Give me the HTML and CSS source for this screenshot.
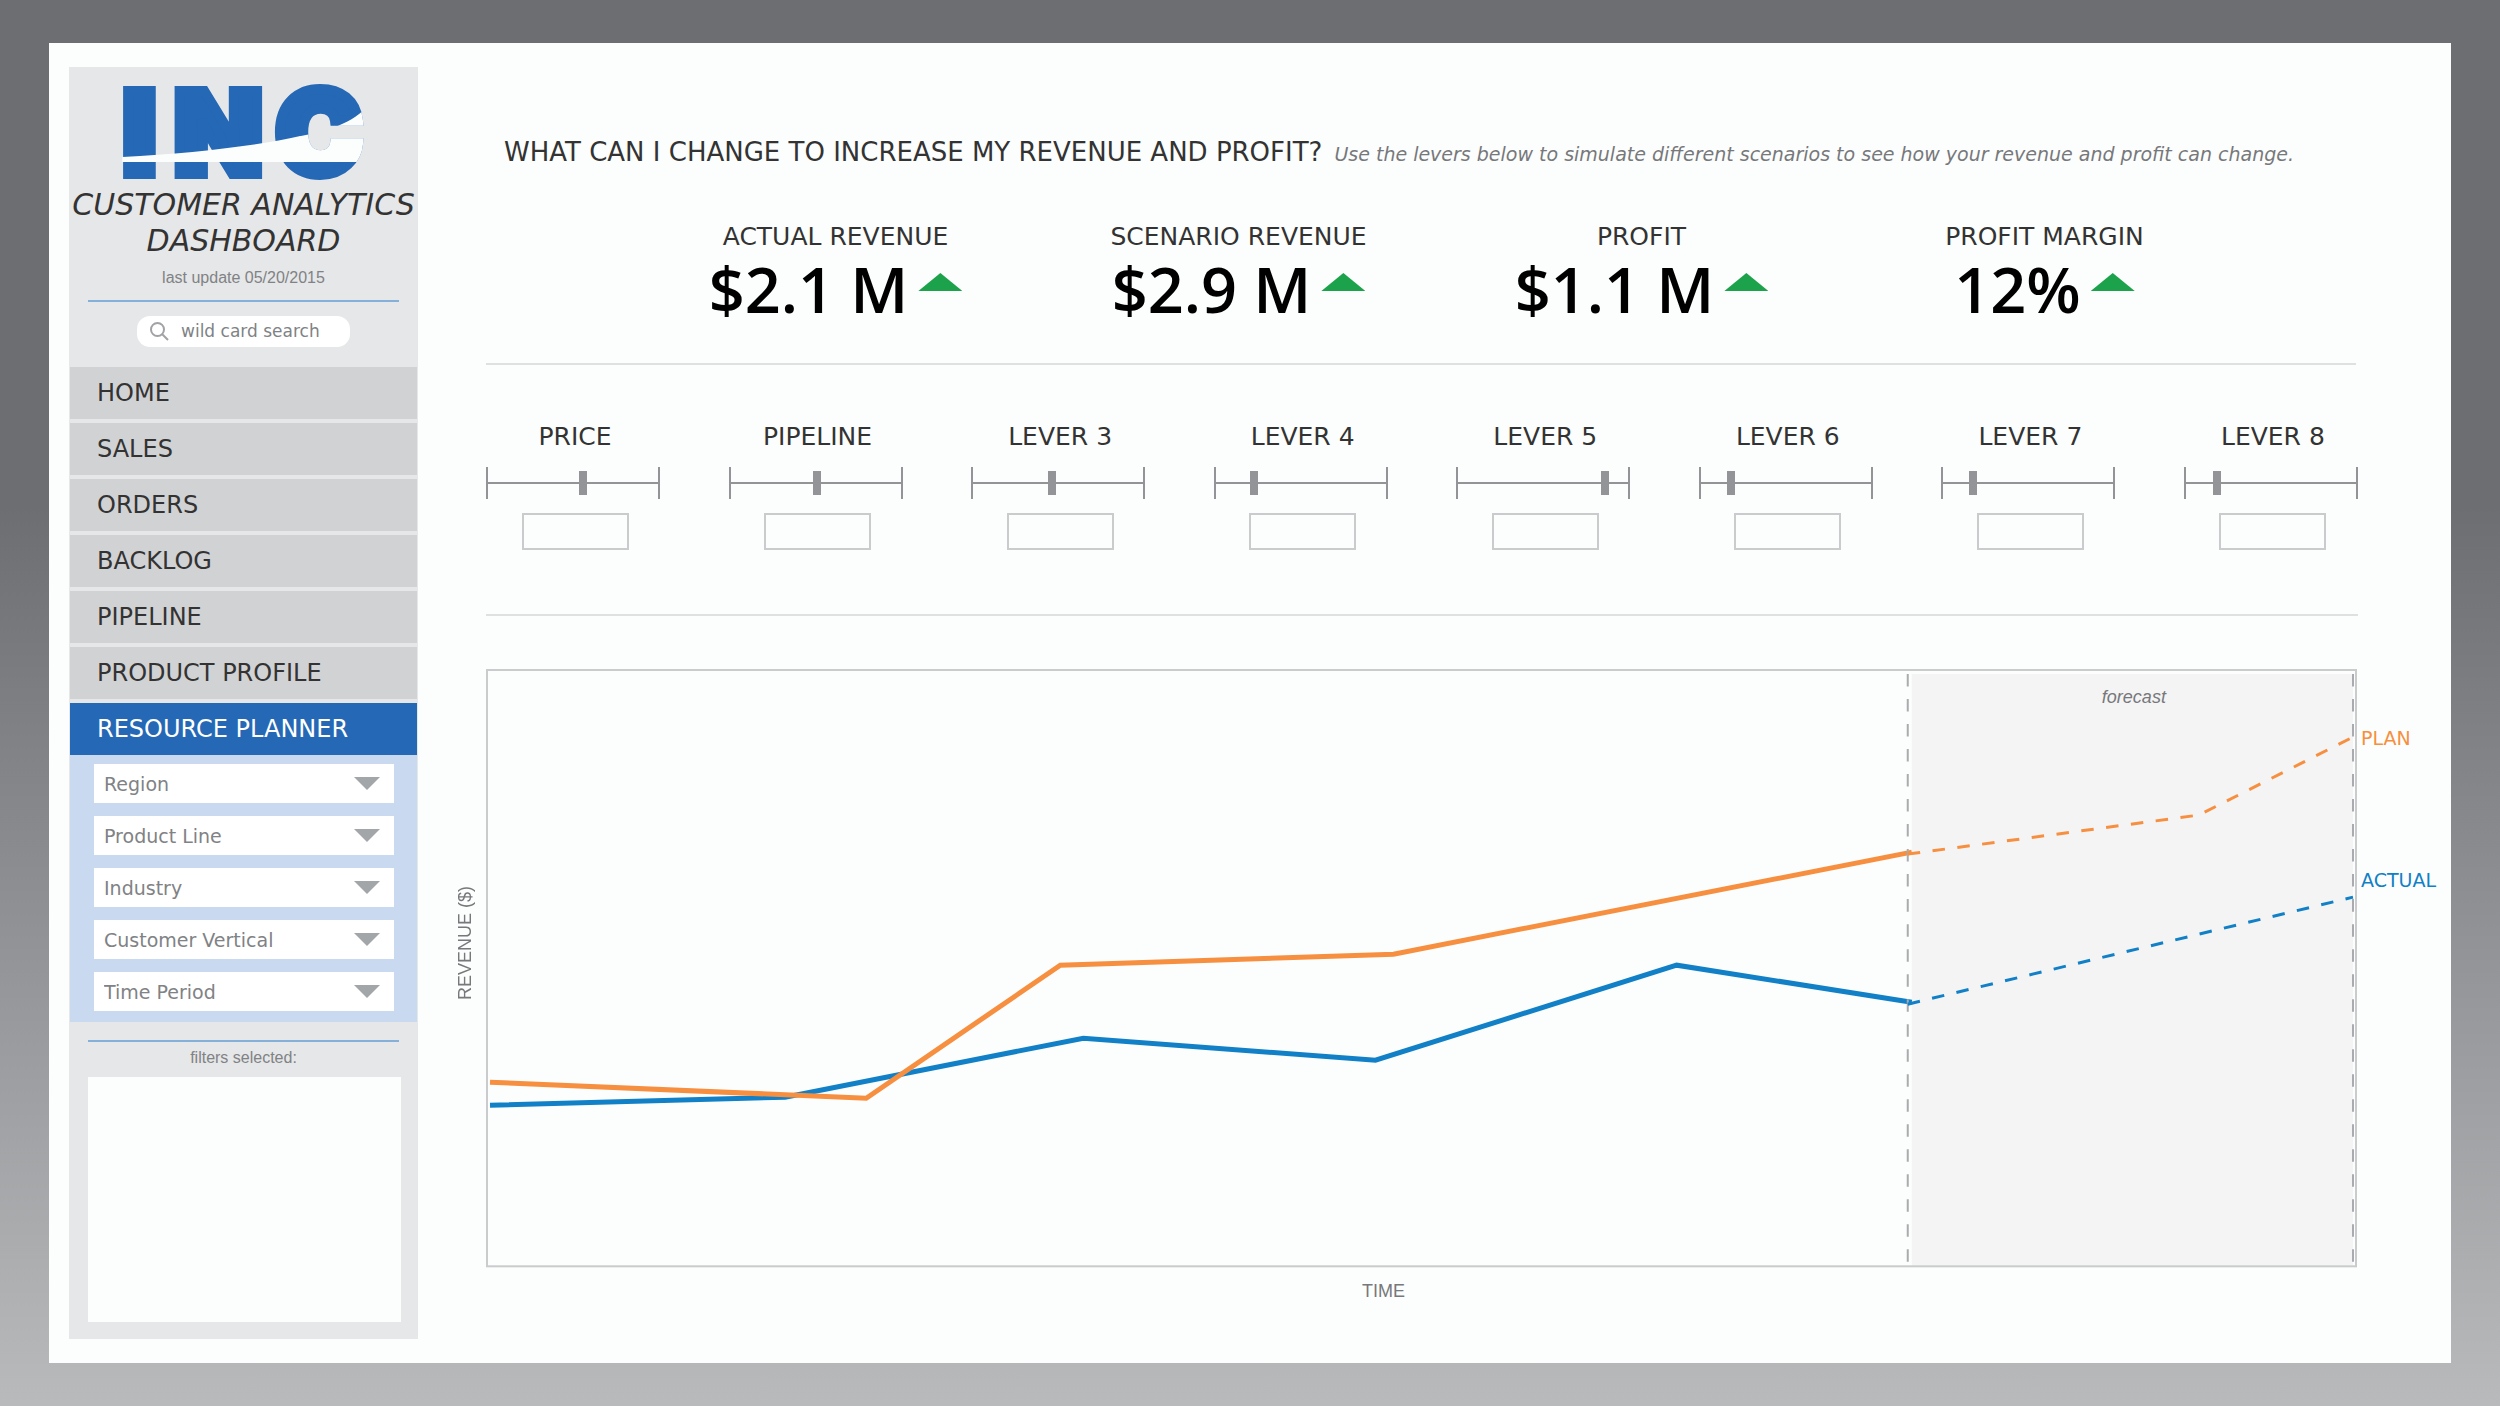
FILE: index.html
```html
<!DOCTYPE html>
<html lang="en">
<head>
<meta charset="utf-8">
<meta name="viewport" content="width=device-width, initial-scale=1">
<title>Customer Analytics Dashboard</title>
<link rel="stylesheet" href="styles.css">
</head>
<body>
<div class="panel">
  <aside class="sidebar">
    <svg class="logo" viewBox="248 162 726 291" role="img" aria-label="INC">
      <defs>
        <mask id="letters" maskUnits="userSpaceOnUse" x="240" y="150" width="750" height="320">
          <text class="logo-text logo-mask" x="247 402 707" y="431">INC</text>
        </mask>
      </defs>
      <text class="logo-text" x="247 402 707" y="431">INC</text>
      <path class="swoosh" d="M246 381C450 370 650 348 780 318V396H246Z"/>
      <path class="swoosh" mask="url(#letters)" d="M778 319C860 302 940 280 985 224V396H778Z"/>
    </svg>
    <h1 class="brand">CUSTOMER ANALYTICS DASHBOARD</h1>
    <p class="updated">last update 05/20/2015</p>
    <hr class="rule">
    <label class="search">
      <svg class="search-icon" viewBox="0 0 19 19" aria-hidden="true"><circle cx="7.5" cy="7.5" r="6.5"/><path d="M12 12L18 18"/></svg>
      <input class="search-input" type="search" placeholder="wild card search" aria-label="wild card search">
    </label>
    <nav class="nav">
      <a class="nav-link" href="#home">HOME</a>
      <a class="nav-link" href="#sales">SALES</a>
      <a class="nav-link" href="#orders">ORDERS</a>
      <a class="nav-link" href="#backlog">BACKLOG</a>
      <a class="nav-link" href="#pipeline">PIPELINE</a>
      <a class="nav-link" href="#profile">PRODUCT PROFILE</a>
      <a class="nav-link active" href="#planner" aria-current="page">RESOURCE PLANNER</a>
    </nav>
    <div class="filters">
      <div class="filter"><select class="filter-select" aria-label="Region"><option>Region</option></select></div>
      <div class="filter"><select class="filter-select" aria-label="Product Line"><option>Product Line</option></select></div>
      <div class="filter"><select class="filter-select" aria-label="Industry"><option>Industry</option></select></div>
      <div class="filter"><select class="filter-select" aria-label="Customer Vertical"><option>Customer Vertical</option></select></div>
      <div class="filter"><select class="filter-select" aria-label="Time Period"><option>Time Period</option></select></div>
    </div>
    <hr class="rule rule-filters">
    <p class="selected-title">filters selected:</p>
    <div class="selected-box"></div>
  </aside>

  <main class="main">
    <header class="heading">
      <h2 class="question">WHAT CAN I CHANGE TO INCREASE MY REVENUE AND PROFIT?</h2>
      <p class="hint">Use the levers below to simulate different scenarios to see how your revenue and profit can change.</p>
    </header>

    <section class="kpis">
      <div class="kpi"><h3 class="label">ACTUAL REVENUE</h3><p class="kpi-value">$2.1 M<span class="up"></span></p></div>
      <div class="kpi"><h3 class="label">SCENARIO REVENUE</h3><p class="kpi-value">$2.9 M<span class="up"></span></p></div>
      <div class="kpi"><h3 class="label">PROFIT</h3><p class="kpi-value">$1.1 M<span class="up"></span></p></div>
      <div class="kpi"><h3 class="label">PROFIT MARGIN</h3><p class="kpi-value">12%<span class="up"></span></p></div>
    </section>

    <section class="levers">
      <div class="lever"><label class="label" for="l1">PRICE</label><input class="slider" id="l1" type="range" value="56"><input class="amount" type="text" aria-label="Price value"></div>
      <div class="lever"><label class="label" for="l2">PIPELINE</label><input class="slider" id="l2" type="range" value="51"><input class="amount" type="text" aria-label="Pipeline value"></div>
      <div class="lever"><label class="label" for="l3">LEVER 3</label><input class="slider" id="l3" type="range" value="46"><input class="amount" type="text" aria-label="Lever 3 value"></div>
      <div class="lever"><label class="label" for="l4">LEVER 4</label><input class="slider" id="l4" type="range" value="21"><input class="amount" type="text" aria-label="Lever 4 value"></div>
      <div class="lever"><label class="label" for="l5">LEVER 5</label><input class="slider" id="l5" type="range" value="88"><input class="amount" type="text" aria-label="Lever 5 value"></div>
      <div class="lever"><label class="label" for="l6">LEVER 6</label><input class="slider" id="l6" type="range" value="16"><input class="amount" type="text" aria-label="Lever 6 value"></div>
      <div class="lever"><label class="label" for="l7">LEVER 7</label><input class="slider" id="l7" type="range" value="16"><input class="amount" type="text" aria-label="Lever 7 value"></div>
      <div class="lever"><label class="label" for="l8">LEVER 8</label><input class="slider" id="l8" type="range" value="17"><input class="amount" type="text" aria-label="Lever 8 value"></div>
    </section>

    <section class="chart">
      <p class="axis axis-y">REVENUE ($)</p>
      <svg class="plot" viewBox="0 0 1870 598" role="img" aria-label="Plan and actual revenue over time">
        <rect class="forecast-area" x="1425" y="5" width="441" height="592"/>
        <rect class="frame" x="1" y="1" width="1868" height="596"/>
        <polyline class="line actual" points="4,436 299,428 597,369 889,391 1190,296 1425,333"/>
        <polyline class="line plan" points="4,413 380,429 574,296 907,285 1425,183"/>
        <path class="bound" d="M1421 5V594M1866 5V594"/>
        <polyline class="line dashed plan" points="1421,185 1712,146 1866,68"/>
        <polyline class="line dashed actual" points="1421,335 1866,228"/>
        <text class="forecast-label" x="1647" y="34">forecast</text>
        <text class="series plan-text" x="1874" y="76">PLAN</text>
        <text class="series actual-text" x="1874" y="218">ACTUAL</text>
      </svg>
      <p class="axis axis-x">TIME</p>
    </section>
  </main>
</div>
</body>
</html>
```
FILE: styles.css
```css
* { box-sizing: border-box; }

body {
  margin: 0;
  min-height: 100vh;
  padding: 43px 49px;
  display: flex;
  background: linear-gradient(#6d6e72 36%, #b9babc);
  font-family: "DejaVu Sans", Verdana, sans-serif;
  color: #333;
}

h1, h2, h3, p { margin: 0; font-weight: 400; }

.panel {
  flex: 1;
  display: flex;
  padding: 24px 0 24px 20px;
  background: #fcfefd;
}

/* Sidebar */
.sidebar {
  flex: 0 0 349px;
  display: flex;
  flex-direction: column;
  padding: 17px 1px;
  background: #e6e7e8;
}
.logo { width: 242px; align-self: center; overflow: visible; }
.logo-text {
  font: 900 344px Inter, sans-serif;
  fill: #2568b5;
  stroke: #2568b5;
  stroke-width: 30px;
}
.logo-mask { fill: #fff; stroke: #fff; }
.swoosh { fill: #fcfefd; }
.brand {
  margin: 6px -8px 0;
  font-size: 30px;
  line-height: 36px;
  font-style: italic;
  text-align: center;
}
.updated, .selected-title {
  font-family: "Liberation Sans", Arial, sans-serif;
  font-size: 16px;
  line-height: 20px;
  text-align: center;
  color: #808285;
}
.updated { margin-top: 9px; }
.rule {
  width: 311px;
  height: 2px;
  margin: 12px auto 0;
  border: 0;
  background: #84b0d9;
}
.rule-filters { margin-top: 18px; }
.search {
  display: flex;
  align-items: center;
  gap: 12px;
  width: 213px;
  height: 31px;
  margin: 14px auto 20px;
  padding: 0 13px;
  border-radius: 13px;
  background: #fff;
}
.search-icon { flex: none; width: 19px; height: 19px; fill: none; stroke: #a0a2a5; stroke-width: 2; }
.search-input {
  flex: 1;
  min-width: 0;
  padding: 0 0 2px;
  border: 0;
  outline: 0;
  background: none;
  font: 17px "DejaVu Sans", Verdana, sans-serif;
  color: #808285;
  appearance: none;
}
.search-input::placeholder { color: #808285; }
.nav { display: flex; flex-direction: column; gap: 4px; }
.nav-link {
  padding: 0 27px;
  font-size: 24px;
  line-height: 52px;
  background: #d1d2d4;
  color: #333;
  text-decoration: none;
}
.nav-link.active { background: #2568b5; color: #fff; }
.filters {
  display: flex;
  flex-direction: column;
  gap: 13px;
  padding: 9px 23px 11px 24px;
  background: #c9d9ef;
}
.filter { display: grid; align-items: center; }
.filter-select {
  grid-area: 1 / 1;
  height: 39px;
  padding: 0 48px 0 10px;
  border: 0;
  border-radius: 0;
  background: #fff;
  font: 19px "DejaVu Sans", Verdana, sans-serif;
  color: #808285;
  appearance: none;
}
.filter::after {
  content: "";
  grid-area: 1 / 1;
  justify-self: end;
  width: 26px;
  height: 13px;
  margin-right: 14px;
  background: #a3a6a9;
  clip-path: polygon(0 0, 100% 0, 50% 100%);
  pointer-events: none;
}
.selected-title { margin-top: 6px; }
.selected-box {
  height: 245px;
  margin: 9px 16px 0 18px;
  background: #fcfefd;
}

/* Main */
.main { flex: 1; min-width: 0; padding-top: 69px; }
.heading {
  display: flex;
  align-items: baseline;
  gap: 12px;
  padding-left: 86px;
  white-space: nowrap;
}
.question { font-size: 26px; line-height: 32px; }
.hint { font-size: 19px; line-height: 24px; font-style: italic; color: #77787b; }
.label { font-size: 25px; line-height: 32px; }
.kpis {
  display: grid;
  grid-template-columns: repeat(4, 1fr);
  margin: 53px 95px 0 68px;
  padding: 0 110px 38px 148px;
  border-bottom: 2px solid #dfe1e1;
  text-align: center;
}
.kpi-value {
  display: flex;
  justify-content: center;
  align-items: center;
  gap: 10px;
  font: 600 63px/72px "Open Sans", sans-serif;
  color: #000;
}
.up {
  width: 44px;
  height: 18px;
  margin-bottom: 14px;
  background: #1ba24a;
  clip-path: polygon(50% 0, 100% 100%, 0 100%);
}
.levers {
  display: flex;
  justify-content: space-between;
  margin: 0 93px 0 68px;
  padding: 56px 0 64px;
  border-bottom: 2px solid #dfe1e1;
}
.lever { display: flex; flex-direction: column; align-items: center; gap: 14px; }
.lever .label, .amount { margin-left: 4px; }
.slider {
  width: 174px;
  height: 32px;
  margin: 0;
  border: solid #929497;
  border-width: 0 2px;
  background: linear-gradient(#929497, #929497) center / 100% 2px no-repeat;
  appearance: none;
}
.slider::-webkit-slider-thumb {
  width: 8px;
  height: 24px;
  background: #929497;
  appearance: none;
}
.slider::-moz-range-thumb {
  width: 8px;
  height: 24px;
  border: 0;
  border-radius: 0;
  background: #929497;
}
.amount {
  width: 107px;
  height: 37px;
  border: 2px solid #c9cbcc;
  background: none;
  text-align: center;
}

/* Chart */
.chart {
  display: grid;
  grid-template-columns: 33px 1fr;
  align-items: center;
  margin: 53px 94px 0 35px;
}
.axis, .forecast-label {
  font-family: "Liberation Sans", Arial, sans-serif;
  font-size: 18px;
  line-height: 24px;
}
.axis { color: #77787b; }
.axis-y { margin-bottom: 50px; writing-mode: vertical-rl; transform: rotate(180deg); white-space: nowrap; justify-self: start; }
.axis-x { grid-column: 2; padding-right: 76px; text-align: center; margin-top: 12px; }
.plot { width: 100%; height: auto; display: block; overflow: visible; }
.frame { fill: none; stroke: #c9cbcc; stroke-width: 2; }
.forecast-area { fill: #f4f4f5; }
.bound { fill: none; stroke: #a9abae; stroke-width: 2; stroke-dasharray: 12.5; }
.line { fill: none; stroke-width: 5; }
.plan { stroke: #f78f40; }
.actual { stroke: #1280c6; }
.dashed { stroke-width: 3; stroke-dasharray: 12.5; }
.forecast-label { font-style: italic; text-anchor: middle; fill: #77787b; }
.series { font-size: 19px; }
.plan-text { fill: #f78f40; }
.actual-text { fill: #1280c6; }
```
